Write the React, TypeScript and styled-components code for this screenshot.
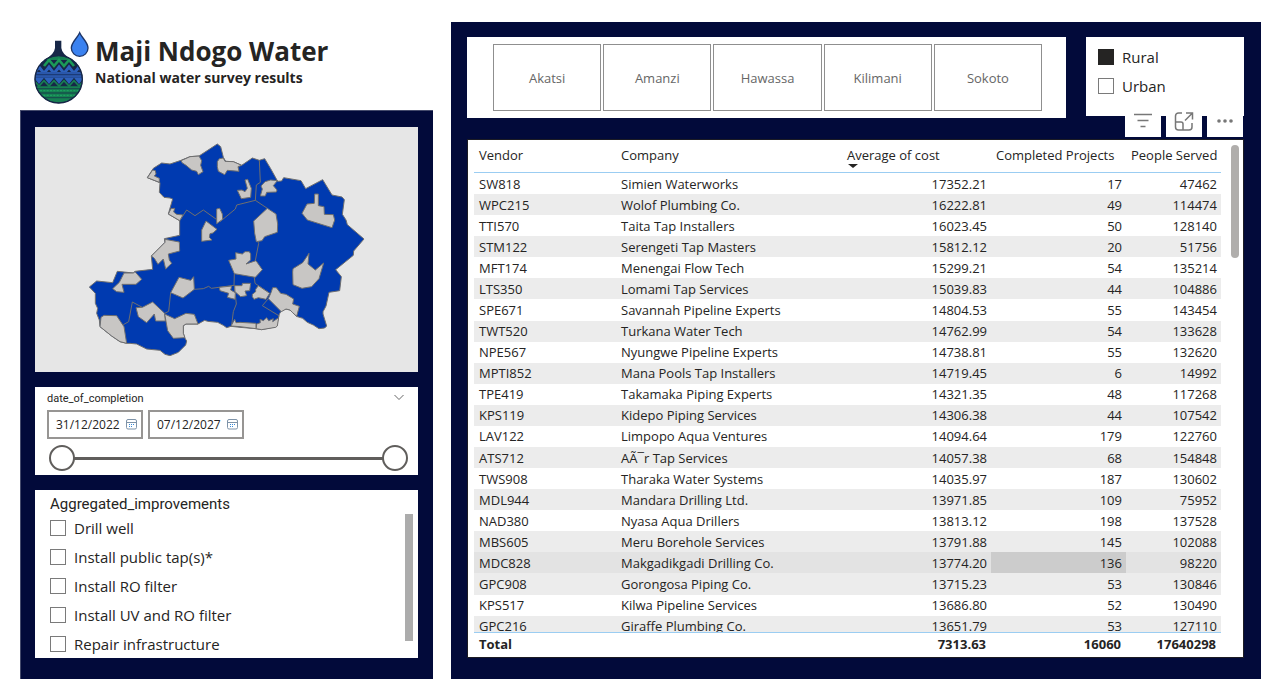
import React, { useState } from "react";
import styled, { createGlobalStyle } from "styled-components";

const NAVY = "#020a3a";
const INK = "#252423";
const SANS = '"Open Sans", "Noto Sans", sans-serif';
const DIN = 'Roboto, "Liberation Sans", sans-serif';

const GlobalStyle = createGlobalStyle`
  *, *::before, *::after { box-sizing: border-box; }
  body { margin: 0; background: #fff; color: ${INK}; font-family: ${SANS}; }
  button, input { font: inherit; color: inherit; }
`;

const Page = styled.main`
  display: grid;
  grid-template-columns: minmax(0, 413fr) minmax(0, 810fr);
  gap: 18px;
  padding: 22px 18px 20px 20px;
`;

const Column = styled.div`
  display: flex;
  flex-direction: column;
`;

const Brand = styled.header`
  display: flex;
  gap: 3px;
  height: 88px;
  padding: 8px 12px 0;
`;

const BrandText = styled.div`
  display: flex;
  flex-direction: column;
  padding-top: 4px;
`;

const Title = styled.h1`
  margin: 0;
  font-size: 26px;
  line-height: 34px;
  font-weight: 700;
  white-space: nowrap;
`;

const Subtitle = styled.p`
  margin: 0;
  font-size: 14px;
  line-height: 20px;
  font-weight: 700;
  white-space: nowrap;
`;

const SidePanel = styled.section`
  flex: 1;
  display: flex;
  flex-direction: column;
  gap: 15px;
  padding: 16px 15px 20px 14px;
  background: ${NAVY};
  border: solid #454b6c;
  border-width: 1px 0 0 1px;
`;

const MapCard = styled.figure`
  margin: 0;
  height: 245px;
  background: #e6e6e6;
`;

const MapDrawing = styled.svg`
  display: block;
  width: 100%;
  height: 100%;
`;

const DateCard = styled.section`
  height: 88px;
  padding: 5px 9px 0 12px;
  background: #fff;
`;

const DateHeading = styled.div`
  display: flex;
  justify-content: space-between;
  height: 18px;
  padding-right: 5px;
`;

const DateTitle = styled.h2`
  margin: 0;
  font-family: ${DIN};
  font-size: 11px;
  line-height: 14px;
  font-weight: 400;
`;

const PlainButton = styled.button`
  display: flex;
  padding: 0;
  border: 0;
  background: none;
`;

const DateFields = styled.div`
  display: flex;
  gap: 5px;
`;

const DateField = styled.div`
  display: flex;
  align-items: center;
  width: 96px;
  height: 29px;
  padding: 0 4px 0 7px;
  border: 2px solid #979593;
`;

const DateInput = styled.input`
  flex: 1;
  min-width: 0;
  padding: 0;
  border: 0;
  outline: 0;
  background: none;
  font-size: 12px;
  line-height: 16px;
`;

const RangeTrack = styled.div`
  position: relative;
  height: 26px;
  margin: 6px 1px 0 2px;
  padding: 12px 12px 0;
  &::before {
    content: "";
    display: block;
    height: 3px;
    background: #605e5c;
  }
`;

const RangeHandle = styled.input`
  position: absolute;
  inset: 0;
  width: 100%;
  height: 26px;
  margin: 0;
  appearance: none;
  background: none;
  pointer-events: none;
  &::-webkit-slider-thumb {
    appearance: none;
    width: 26px;
    height: 26px;
    border: 2px solid #605e5c;
    border-radius: 50%;
    background: #fff;
    pointer-events: auto;
  }
`;

const ListCard = styled.section`
  display: flex;
  justify-content: space-between;
  height: 168px;
  padding: 4px 5px 0 15px;
  background: #fff;
  overflow: hidden;
`;

const ListTitle = styled.h2`
  margin: 0;
  font-family: ${DIN};
  font-size: 15px;
  line-height: 20px;
  font-weight: 400;
`;

const Options = styled.div`
  display: flex;
  flex-direction: column;
`;

const Option = styled.label`
  display: flex;
  align-items: center;
  gap: 8px;
  height: 29px;
  font-size: 15px;
  line-height: 20px;
  white-space: nowrap;
`;

const Box = styled.input`
  flex: none;
  width: 16px;
  height: 16px;
  margin: 0;
  appearance: none;
  border: 1px solid #7a7a7a;
  background: #fff;
  &:checked { background: ${INK}; border-color: ${INK}; }
`;

const ListThumb = styled.div`
  width: 8px;
  height: 127px;
  margin-top: 20px;
  background: #acacac;
`;

const MainPanel = styled.section`
  display: flex;
  flex-direction: column;
  gap: 21px;
  padding: 15px 17px 21px 16px;
  background: ${NAVY};
`;

const Filters = styled.div`
  display: flex;
  align-items: flex-start;
  gap: 20px;
`;

const Provinces = styled.div`
  flex: 1;
  display: flex;
  gap: 2px;
  height: 81px;
  padding: 7px 24px 7px 26px;
  background: #fff;
`;

const Province = styled.button`
  flex: 1;
  border: 1px solid #8f8f8f;
  background: #fff;
  color: #666;
  font-size: 13px;
`;

const AreaCard = styled.div`
  width: 158px;
  height: 79px;
  padding: 5px 12px;
  background: #fff;
`;

const TableCard = styled.div`
  position: relative;
  display: flex;
  gap: 10px;
  height: 519px;
  padding: 0 4px 0 6px;
  border: 1px solid #1c1c24;
  background: #fff;
`;

const VisualTools = styled.div`
  position: absolute;
  right: 0;
  bottom: calc(100% + 3px);
  display: flex;
  gap: 5px;
`;

const ToolButton = styled.button`
  display: flex;
  justify-content: center;
  width: 36px;
  height: 28px;
  padding: 2px 0 0;
  border: 0;
  background: #fff;
  color: #777;
`;

const Scroller = styled.div`
  flex: 1;
  overflow: hidden;
`;

const VendorTable = styled.table`
  width: 100%;
  height: 522px;
  table-layout: fixed;
  border-collapse: separate;
  border-spacing: 0;
  font-size: 13px;
  line-height: 16px;
`;

const Col = styled.col<{ $w?: number }>`
  width: ${(p) => (p.$w ? `${p.$w}px` : "auto")};
`;

const HeadCell = styled.th`
  position: sticky;
  top: 0;
  height: 33px;
  padding: 0 5px 2px;
  border-bottom: 1px solid #9bcdf2;
  background: #fff;
  font-weight: 400;
  text-align: left;
  white-space: nowrap;
`;

const SortArrow = styled.span`
  position: absolute;
  left: 6px;
  top: 24px;
  border: solid transparent;
  border-width: 4px 5px 0;
  border-top-color: ${INK};
`;

const Row = styled.tr<{ $hover?: boolean }>`
  background: ${(p) => (p.$hover ? "#e3e3e3" : "#fff")};
  &:nth-child(even) { background: #ececec; }
`;

const Cell = styled.td<{ $num?: boolean; $picked?: boolean }>`
  height: 21px;
  padding: 0 4px 0 5px;
  text-align: ${(p) => (p.$num ? "right" : "left")};
  background: ${(p) => (p.$picked ? "#cccccc" : "transparent")};
  white-space: nowrap;
`;

const TotalCell = styled.td<{ $num?: boolean }>`
  position: sticky;
  bottom: 0;
  height: 25px;
  padding: 0 5px 3px;
  border-top: 1px solid #9bcdf2;
  background: #fff;
  font-weight: 700;
  text-align: ${(p) => (p.$num ? "right" : "left")};
`;

const TableThumb = styled.div`
  width: 8px;
  height: 113px;
  margin-top: 5px;
  border-radius: 4px;
  background: #b0aeac;
`;

const vendors: [string, string, string, string, string][] = [
  ["SW818", "Simien Waterworks", "17352.21", "17", "47462"],
  ["WPC215", "Wolof Plumbing Co.", "16222.81", "49", "114474"],
  ["TTI570", "Taita Tap Installers", "16023.45", "50", "128140"],
  ["STM122", "Serengeti Tap Masters", "15812.12", "20", "51756"],
  ["MFT174", "Menengai Flow Tech", "15299.21", "54", "135214"],
  ["LTS350", "Lomami Tap Services", "15039.83", "44", "104886"],
  ["SPE671", "Savannah Pipeline Experts", "14804.53", "55", "143454"],
  ["TWT520", "Turkana Water Tech", "14762.99", "54", "133628"],
  ["NPE567", "Nyungwe Pipeline Experts", "14738.81", "55", "132620"],
  ["MPTI852", "Mana Pools Tap Installers", "14719.45", "6", "14992"],
  ["TPE419", "Takamaka Piping Experts", "14321.35", "48", "117268"],
  ["KPS119", "Kidepo Piping Services", "14306.38", "44", "107542"],
  ["LAV122", "Limpopo Aqua Ventures", "14094.64", "179", "122760"],
  ["ATS712", "AÃ¯r Tap Services", "14057.38", "68", "154848"],
  ["TWS908", "Tharaka Water Systems", "14035.97", "187", "130602"],
  ["MDL944", "Mandara Drilling Ltd.", "13971.85", "109", "75952"],
  ["NAD380", "Nyasa Aqua Drillers", "13813.12", "198", "137528"],
  ["MBS605", "Meru Borehole Services", "13791.88", "145", "102088"],
  ["MDC828", "Makgadikgadi Drilling Co.", "13774.20", "136", "98220"],
  ["GPC908", "Gorongosa Piping Co.", "13715.23", "53", "130846"],
  ["KPS517", "Kilwa Pipeline Services", "13686.80", "52", "130490"],
  ["GPC216", "Giraffe Plumbing Co.", "13651.79", "53", "127110"],
];

const country =
  "412,42 422,50 430,82 437,94 460,95 485,106 517,84 538,91 554,86 572,116 593,154 605,153 611,143 663,152 677,176 728,149 756,195 786,201 793,209 787,253 798,270 802,284 852,327 821,363 820,376 767,419 784,440 779,482 747,487 738,528 729,545 729,552 740,588 734,594 717,596 700,585 682,577 668,565 649,559 638,548 630,540 618,537 606,540 598,552 594,570 588,590 545,599 528,596 480,592 453,589 440,593 430,586 413,577 383,574 374,571 354,582 318,582 310,587 310,610 314,623 320,633 317,645 295,667 270,677 255,673 240,661 200,657 170,642 150,640 140,640 120,635 95,618 60,590 58,570 50,550 53,535 46,520 46,490 28,471 50,453 98,458 112,424 160,429 165,424 218,418 214,378 233,360 255,337 253,326 299,316 299,272 265,252 278,207 270,204 252,202 238,187 240,158 202,143 220,115 245,99 270,102 303,91 330,80 357,78";

const districts = [
  "303,92 330,80 357,78 365,92 362,106 369,125 355,134 350,124 335,120 318,106 306,98",
  "412,95 418,86 430,84 435,94 460,95 485,106 474,110 477,124 442,121 434,134 415,124 412,110",
  "202,143 218,120 226,122 228,132 223,138 238,145 238,157",
  "265,252 273,236 284,235 281,246 290,253 309,255 299,272",
  "365,334 365,300 378,273 411,298 399,309 390,311 388,322 396,330",
  "410,237 419,235 427,252 428,268 410,281",
  "214,378 255,337 255,328 298,336 299,363 265,372 268,390 275,400 257,417 250,387 234,403 223,385",
  "472,181 486,180 495,185 502,175 495,150 503,148 514,175 512,202 484,206",
  "541,198 547,177 543,168 555,155 572,150 592,152 580,167 591,180 589,186 560,187 556,198",
  "521,273 562,235 588,252 593,282 592,307 554,320 546,332 529,335 524,310",
  "666,250 681,222 703,220 704,192 715,192 715,227 732,230 733,253 760,254 764,270 756,293 682,270",
  "446,391 468,387 467,368 487,372 495,365 508,365 512,372 512,390 498,402 528,392 547,419 526,442 463,431",
  "638,426 639,416 668,398 687,370 684,402 706,420 731,399 717,446 695,470 666,475 639,464",
  "565,506 573,488 578,473 589,473 602,490 618,493 641,507 638,522 658,529 650,559 638,548 630,540 618,537 604,545",
  "517,493 527,485 527,478 535,467 569,490 558,508 535,503 522,508 517,500",
  "464,467 486,467 487,460 512,460 509,482 495,483 500,497 482,500 465,485",
  "418,472 455,468 452,480 466,488 465,508 442,502 446,490 420,482",
  "528,596 530,582 541,578 540,568 550,572 560,563 566,572 580,566 578,575 596,563 592,588 587,592 545,599",
  "453,588 458,579 464,568 468,578 480,577 528,580 528,596 480,590",
  "98,476 118,457 132,429 160,429 165,425 185,448 168,463 126,463 132,487 110,485",
  "272,488 297,442 332,451 341,440 343,478 309,504",
  "168,533 187,532 218,516 254,550 256,573 227,573 223,552 200,578 175,560",
  "254,552 284,566 318,550 343,553 354,582 318,582 310,587 310,610 315,623 280,625 263,602",
  "63,562 72,556 110,557 132,590 140,640 120,635 95,618 60,590",
];

const borders = [
  "299,272 320,240 345,257 370,240 409,268",
  "420,275 466,237 470,225 526,211 562,235",
  "526,211 529,165 541,157 538,91",
  "533,334 536,340 526,392",
  "343,478 370,476 386,469 394,475 462,466 463,431",
  "463,467 469,522 460,545 455,586",
  "523,442 525,460 569,490",
  "565,506 547,527 598,558",
  "272,488 266,544 254,550",
  "130,584 146,575 157,516 187,532",
];

function CountryMap() {
  return (
    <MapDrawing viewBox="-135 -9 1149 735" role="img" aria-label="Map of Maji Ndogo">
      <g stroke="#6f6f6f" strokeWidth="3" strokeLinejoin="round">
        <polygon points={country} fill="#003ab0" />
        {borders.map((points) => (
          <polyline key={points} points={points} fill="none" />
        ))}
        {districts.map((points) => (
          <polygon key={points} points={points} fill="#c8c6c4" />
        ))}
      </g>
    </MapDrawing>
  );
}

function Logo() {
  return (
    <svg width="60" height="75" viewBox="36 30 180 225" aria-hidden="true">
      <defs>
        <clipPath id="gourd">
          <circle cx="116" cy="178" r="70" />
        </clipPath>
      </defs>
      <path d="M105 62h19v22q2 20 34 36H72q31-16 33-36z" fill="#172747" />
      <circle cx="116" cy="178" r="72" fill="#172747" />
      <g clipPath="url(#gourd)" fill="none">
        <path d="M40 100h152v20H40z" fill="#178052" />
        <path d="M72 138l15-18 15 18 15-18 15 18 15-18 15 18" stroke="#1b9a58" strokeWidth="8" />
        <path d="M42 160l15-19 15 19 15-19 15 19 15-19 15 19 15-19 15 19 15-19 15 19" stroke="#2d61bd" strokeWidth="9" />
        <path d="M40 156h152v17H40z" fill="#2a57ab" />
        <path d="M40 164h152" stroke="#1a376f" strokeWidth="3" />
        <path d="M42 173h150l-15 19-15-19-15 19-15-19-15 19-15-19-15 19-15-19-15 19z" fill="#2d61bd" />
        <path d="M42 182l15 16 15-16 15 16 15-16 15 16 15-16 15 16 15-16 15 16 15-16" stroke="#178052" strokeWidth="5" />
        <path d="M40 199h152v50H40z" fill="#178052" />
        <path d="M40 206h152M40 219h152M40 233h152" stroke="#17504c" strokeWidth="4" />
        <path d="M40 212h152M40 226h152" stroke="#1fa562" strokeWidth="3" strokeDasharray="6 4" />
      </g>
      <circle cx="116" cy="178" r="71" fill="none" stroke="#172747" strokeWidth="4" />
      <path
        d="M179 38c-8 18-25 29-25 46a25 25 0 0 0 50 0c0-17-17-28-25-46z"
        fill="#3b82f0"
        stroke="#1d3568"
        strokeWidth="4"
      />
    </svg>
  );
}

function CalendarIcon() {
  return (
    <svg width="11" height="11" viewBox="0 0 11 11" fill="none" aria-hidden="true">
      <rect x=".5" y=".5" width="10" height="9.5" rx="1.5" stroke="#7e93a8" />
      <path d="M1 3.5h9" stroke="#7e93a8" />
      <path d="M3 5.5h1M5 5.5h1M7 5.5h1M3 7.5h1M5 7.5h1" stroke="#3a8ad8" />
    </svg>
  );
}

function DatePicker({ label, initial }: { label: string; initial: string }) {
  const [value, setValue] = useState(initial);
  return (
    <DateField>
      <DateInput aria-label={label} value={value} onChange={(e) => setValue(e.target.value)} />
      <PlainButton type="button" aria-label={`Pick ${label}`}>
        <CalendarIcon />
      </PlainButton>
    </DateField>
  );
}

export default function App() {
  return (
    <>
      <GlobalStyle />
      <Page>
        <Column>
          <Brand>
            <Logo />
            <BrandText>
              <Title>Maji Ndogo Water</Title>
              <Subtitle>National water survey results</Subtitle>
            </BrandText>
          </Brand>
          <SidePanel>
            <MapCard>
              <CountryMap />
            </MapCard>
            <DateCard>
              <DateHeading>
                <DateTitle>date_of_completion</DateTitle>
                <PlainButton type="button" aria-label="Filter type">
                  <svg width="10" height="10" viewBox="0 0 10 10" fill="none" stroke="#666" aria-hidden="true">
                    <path d="M.5 3 5 7.500 9.500 3" />
                  </svg>
                </PlainButton>
              </DateHeading>
              <DateFields>
                <DatePicker label="start date" initial="31/12/2022" />
                <DatePicker label="end date" initial="07/12/2027" />
              </DateFields>
              <RangeTrack>
                <RangeHandle type="range" aria-label="Start of range" min={0} max={100} defaultValue={0} />
                <RangeHandle type="range" aria-label="End of range" min={0} max={100} defaultValue={100} />
              </RangeTrack>
            </DateCard>
            <ListCard>
              <Options>
                <ListTitle>Aggregated_improvements</ListTitle>
                {["Drill well", "Install public tap(s)*", "Install RO filter", "Install UV and RO filter", "Repair infrastructure"].map((name) => (
                  <Option key={name}>
                    <Box type="checkbox" />
                    {name}
                  </Option>
                ))}
              </Options>
              <ListThumb />
            </ListCard>
          </SidePanel>
        </Column>
        <MainPanel>
          <Filters>
            <Provinces>
              {["Akatsi", "Amanzi", "Hawassa", "Kilimani", "Sokoto"].map((name) => (
                <Province key={name} type="button">
                  {name}
                </Province>
              ))}
            </Provinces>
            <AreaCard>
              <Option>
                <Box type="checkbox" defaultChecked />
                Rural
              </Option>
              <Option>
                <Box type="checkbox" />
                Urban
              </Option>
            </AreaCard>
          </Filters>
          <TableCard>
            <VisualTools>
              <ToolButton type="button" aria-label="Filters">
                <svg width="20" height="20" viewBox="0 0 20 20" fill="none" stroke="currentColor" strokeWidth="1.5" aria-hidden="true">
                  <path d="M1 3.500h18M4.500 9.500h11M7.500 15.500h5" />
                </svg>
              </ToolButton>
              <ToolButton type="button" aria-label="Focus mode">
                <svg width="20" height="20" viewBox="0 0 20 20" fill="none" stroke="currentColor" strokeWidth="1.500" aria-hidden="true">
                  <path d="M8 2H4.500A3 3 0 0 0 1.500 5v11a3 3 0 0 0 3 3H15a3 3 0 0 0 3-3v-4M1.500 11H7a2 2 0 0 1 2 2v6M12 2h6.500v6.500M18.500 2 11 9.500" />
                </svg>
              </ToolButton>
              <ToolButton type="button" aria-label="More options">
                <svg width="20" height="20" viewBox="0 0 20 20" fill="currentColor" aria-hidden="true">
                  <circle cx="4" cy="10" r="1.800" />
                  <circle cx="10" cy="10" r="1.800" />
                  <circle cx="16" cy="10" r="1.800" />
                </svg>
              </ToolButton>
            </VisualTools>
            <Scroller>
              <VendorTable>
                <colgroup>
                  <Col $w={142} />
                  <Col />
                  <Col $w={149} />
                  <Col $w={135} />
                  <Col $w={95} />
                </colgroup>
                <thead>
                  <tr>
                    <HeadCell>Vendor</HeadCell>
                    <HeadCell>Company</HeadCell>
                    <HeadCell>
                      Average of cost
                      <SortArrow />
                    </HeadCell>
                    <HeadCell>Completed Projects</HeadCell>
                    <HeadCell>People Served</HeadCell>
                  </tr>
                </thead>
                <tbody>
                  {vendors.map(([id, company, cost, projects, people]) => (
                    <Row key={id} $hover={id === "MDC828"}>
                      <Cell>{id}</Cell>
                      <Cell>{company}</Cell>
                      <Cell $num>{cost}</Cell>
                      <Cell $num $picked={id === "MDC828"}>{projects}</Cell>
                      <Cell $num>{people}</Cell>
                    </Row>
                  ))}
                </tbody>
                <tfoot>
                  <tr>
                    <TotalCell colSpan={2}>Total</TotalCell>
                    <TotalCell $num>7313.63</TotalCell>
                    <TotalCell $num>16060</TotalCell>
                    <TotalCell $num>17640298</TotalCell>
                  </tr>
                </tfoot>
              </VendorTable>
            </Scroller>
            <TableThumb />
          </TableCard>
        </MainPanel>
      </Page>
    </>
  );
}
